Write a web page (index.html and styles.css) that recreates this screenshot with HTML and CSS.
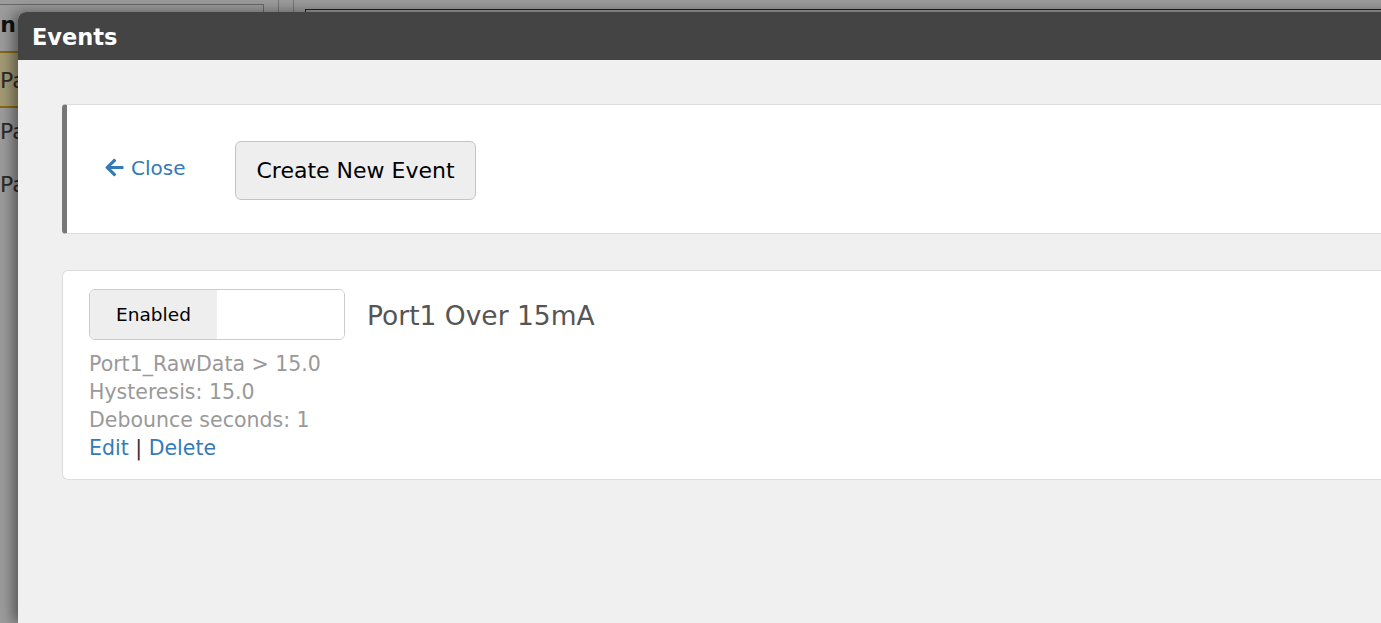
FILE: index.html
```html
<!DOCTYPE html>
<html>
<head>
    <title>Events</title>
    <link rel="stylesheet" href="styles.css">
</head>
<body>
    <div class="page">
        <div class="sidebar">
            <div class="sidebar-title"><span>Design</span></div>
            <div class="sidebar-item active"><span>Pages</span></div>
            <div class="sidebar-item"><span>Params</span></div>
            <div class="sidebar-item"><span>Parts</span></div>
        </div>
        <div class="divider"></div>
        <div class="divider"></div>
        <div class="content-box"></div>
    </div>

    <div class="modal">
        <div class="modal-header">Events</div>
        <div class="modal-body">
            <div class="toolbar">
                <a href="#" class="close-link">
                    <svg width="19" height="19" viewBox="0 20 448 472"><path d="M257.5 445.1l-22.2 22.2c-9.4 9.4-24.6 9.4-33.9 0L7 273c-9.4-9.4-9.4-24.6 0-33.9L201.4 44.7c9.4-9.4 24.6-9.4 33.9 0l22.2 22.2c9.5 9.5 9.3 25-.4 34.3L136.6 216H424c13.3 0 24 10.7 24 24v32c0 13.3-10.7 24-24 24H136.6l120.5 114.8c9.8 9.3 10 24.8.4 34.3z" fill="#337ab7"/></svg>
                    Close
                </a>
                <button class="btn">Create New Event</button>
            </div>

            <div class="event">
                <div class="event-top">
                    <div class="toggle">
                        <span class="toggle-on">Enabled</span>
                        <span class="toggle-off"></span>
                    </div>
                    <div class="event-name">Port1 Over 15mA</div>
                </div>
                <div class="event-info">Port1_RawData &gt; 15.0</div>
                <div class="event-info">Hysteresis: 15.0</div>
                <div class="event-info">Debounce seconds: 1</div>
                <div class="event-links"><a href="#">Edit</a> <span class="sep">|</span> <a href="#">Delete</a></div>
            </div>
        </div>
    </div>
</body>
</html>
```

FILE: styles.css
```css
body {
    margin: 0;
    font-family: "DejaVu Sans", sans-serif;
    background: #9c9c9c;
    overflow: hidden;
    height: 623px;
}
.page {
    display: flex;
    height: 623px;
    padding-top: 4px;
    box-sizing: border-box;
}
.sidebar {
    width: 263px;
    border-top: 1px solid #6a6a6a;
    border-right: 1px solid #6a6a6a;
    color: #2a2a2a;
    font-size: 22px;
}
.sidebar span {
    display: block;
    width: 18px;
    overflow: hidden;
    white-space: nowrap;
}
.sidebar-title span {
    direction: rtl;
    text-align: right;
    margin-left: -2px;
}
.sidebar-title {
    font-weight: bold;
    color: #111;
    height: 46px;
    line-height: 40px;
}
.sidebar-item {
    height: 53px;
    line-height: 47px;
}
.sidebar-item.active {
    background: #a39a74;
    border-top: 2px solid #8a6a10;
    border-bottom: 2px solid #8a6a10;
    line-height: 56px;
}
.divider {
    width: 14px;
    border-right: 1px solid #777;
    margin-top: -4px;
}
.content-box {
    flex: 1;
    margin: 5px 0 0 11px;
    border-top: 1px solid #222;
    border-left: 1px solid #222;
}

.modal {
    position: absolute;
    top: 12px;
    left: 18px;
    right: -20px;
    bottom: 0;
    background: #f0f0f0;
    border-top-left-radius: 8px;
    box-shadow: -5px 0 14px rgba(0, 0, 0, 0.45);
    overflow: hidden;
}
.modal-header {
    background: #444;
    color: #fff;
    font-weight: bold;
    font-size: 22.5px;
    height: 48px;
    line-height: 50px;
    padding-left: 14px;
}
.modal-body {
    padding: 44px 0 0 44px;
}
.toolbar {
    display: flex;
    align-items: center;
    height: 128px;
    background: #fff;
    border: 1px solid #ddd;
    border-left: 5px solid #777;
    border-right: none;
    border-radius: 4px 0 0 4px;
    padding-left: 38px;
    margin-bottom: 36px;
}
.close-link {
    display: flex;
    align-items: center;
    gap: 7px;
    color: #337ab7;
    text-decoration: none;
    font-size: 20px;
    margin-top: -3px;
}
.btn {
    margin-left: 50px;
    font-family: "DejaVu Sans", sans-serif;
    font-size: 22px;
    color: #000;
    background: #eee;
    border: 1px solid #c4c4c4;
    border-radius: 6px;
    height: 59px;
    padding: 0 20px;
    margin-top: 3px;
}
.event {
    background: #fff;
    border: 1px solid #ddd;
    border-right: none;
    border-radius: 6px 0 0 6px;
    padding: 18px 0 18px 26px;
    height: 172px;
}
.event-top {
    display: flex;
    align-items: center;
    margin-bottom: 10px;
}
.toggle {
    display: flex;
    width: 254px;
    height: 49px;
    border: 1px solid #ccc;
    border-radius: 6px;
    overflow: hidden;
}
.toggle-on {
    width: 127px;
    background: #eee;
    color: #000;
    font-size: 18.5px;
    line-height: 50px;
    text-align: center;
}
.toggle-off {
    flex: 1;
    background: #fff;
}
.event-name {
    margin-left: 22px;
    font-size: 26.5px;
    color: #555;
    margin-top: 1px;
}
.event-info {
    font-size: 20.5px;
    color: #999;
    line-height: 28px;
}
.event-links {
    font-size: 20.5px;
    line-height: 28px;
    color: #333;
}
.event-links a {
    color: #337ab7;
    text-decoration: none;
}
```
